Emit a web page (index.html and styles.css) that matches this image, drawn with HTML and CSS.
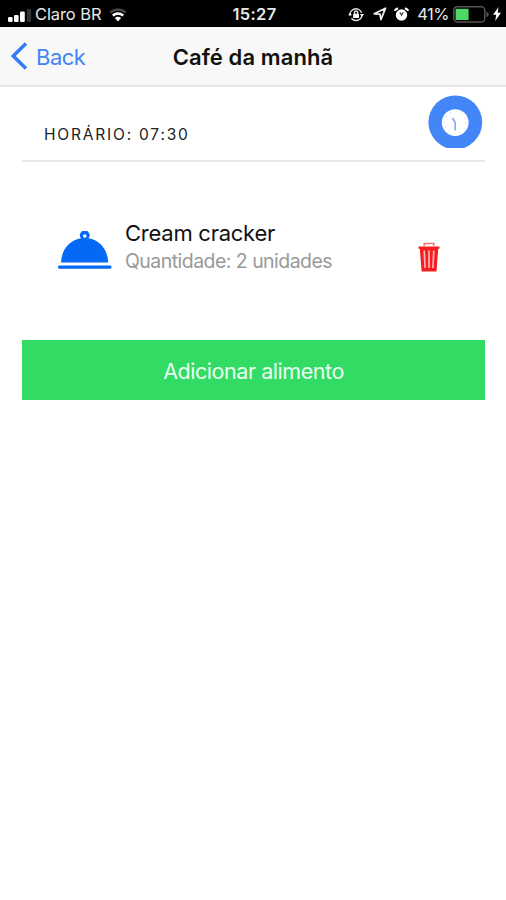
FILE: index.html
```html
<!DOCTYPE html>
<html lang="pt-BR">
<head>
<meta charset="utf-8">
<title>Café da manhã</title>
<link rel="stylesheet" href="styles.css">
</head>
<body>
<div class="status">
  <div class="status-left">
    <svg class="signal" width="24" height="14" viewBox="0 0 24 14"><rect x="0" y="9" width="4.6" height="5" rx="1.2"/><rect x="6" y="7" width="4.6" height="7" rx="1.2"/><rect x="12" y="3.5" width="4.8" height="10.5" rx="1.2"/><rect class="dim" x="18.8" y="1" width="4.4" height="13" rx="1"/></svg>
    <span class="carrier">Claro BR</span>
    <svg class="wifi" width="18" height="14" viewBox="0 0 18 14"><path class="dim-stroke" d="M1.2 4.5Q9-1.5 16.8 4.5"/><path d="M3.8 7.6Q9 3.4 14.2 7.6"/><path class="solid" d="M5.9 10Q9 7.6 12.1 10L9 13.4Z"/></svg>
  </div>
  <span class="clock">15:27</span>
  <div class="status-right">
    <svg class="lock" width="17" height="15" viewBox="0 0 17 15"><path d="M2 8.5A6 6 0 0 1 13.6 5.8M14 8A6 6 0 0 1 3.4 11.3"/><path d="M11.8 7h4.4l-2.2 2.6zM4 8.3H.2L2 5.8z" class="solid"/><rect class="solid" x="5.2" y="6.8" width="5.8" height="4.2" rx=".6"/><path d="M6.5 7V5.5a1.6 1.6 0 0 1 3.2 0V7"/></svg>
    <svg class="arrow" width="14" height="14" viewBox="0 0 14 14"><path d="M1.2 6.8L12.5 1.2L8 12.5L7 7.1Z"/></svg>
    <svg class="alarm" width="15" height="15" viewBox="0 0 15 15"><circle class="solid" cx="7.5" cy="8" r="5.7"/><path d="M1 4Q1.3 1.5 4.2 1.4M10.8 1.4Q13.7 1.5 14 4"/><path class="hands" d="M5.8 5.4L7.6 8.2L9.2 5.3"/></svg>
    <span class="percent">41%</span>
    <svg class="battery" width="37" height="17" viewBox="0 0 37 17"><rect x=".8" y=".8" width="31" height="15.2" rx="3.6"/><path class="nub" d="M33.5 5.5Q38 8.4 33.5 11.3Z"/><rect class="charge" x="2.6" y="2.8" width="13" height="11.2"/></svg>
    <svg class="bolt" width="8" height="14" viewBox="0 0 8 14"><path d="M5.5 0L0 7.8h3.2L2.2 14L8 5.8H4.7Z"/></svg>
  </div>
</div>
<header class="nav">
  <a class="back"><svg width="17" height="28" viewBox="0 0 17 28"><path d="M15 1.6L2.2 14L15 26.4"/></svg><span class="back-label">Back</span></a>
  <h1 class="title">Café da manhã</h1>
</header>
<main class="content">
  <section class="schedule">
    <span class="time">HORÁRIO: 07:30</span>
    <svg class="clock-button" width="55" height="53" viewBox="0 0 55 53"><circle class="disc" cx="27.3" cy="27.3" r="26.9"/><circle class="face" cx="27.2" cy="27.6" r="13.4"/><circle class="ticks" cx="27.2" cy="27.6" r="11"/><path class="hand" d="M24.5 23L27.2 27.3V35.6"/></svg>
  </section>
  <section class="food">
    <svg class="cloche" width="54" height="39" viewBox="0 0 54 39"><path d="M3 31.5C3.5 18 12 9 23 7.2A4.8 4.8 0 1 1 30.5 7.2C41.5 9 49.7 18 50.2 31.5Z"/><circle class="hole" cx="26.8" cy="5" r="1.8"/><rect x="0" y="34.5" width="53.5" height="3.2" rx="1.4"/></svg>
    <div class="details"><span class="food-name">Cream cracker</span><span class="amount">Quantidade: 2 unidades</span></div>
    <svg class="trash" width="22" height="31" viewBox="0 0 22 31"><path class="handle" d="M6.2 4V1.4H15.8V4"/><path class="bin" d="M.5 4.5H21.5V6.8H20.2L18.5 29.6H3.6L1.8 6.8H.5Z"/><path class="slots" d="M6.2 8.5L7.1 26M11 8.5V26M15.8 8.5L14.9 26"/></svg>
  </section>
  <button class="add">Adicionar alimento</button>
</main>
</body>
</html>
```
FILE: styles.css
```css
* { box-sizing: border-box; }
body { margin: 0; min-height: 900px; background: #fff; color: #111; font-family: Inter, "Liberation Sans", sans-serif; }
svg { display: block; flex: none; }
.status { height: 27px; background: #000; color: #e8e8e8; display: grid; grid-template-columns: 1fr auto 1fr; align-items: center; padding: 1px 5px 0 8px; fill: #fff; font-size: 16.5px; line-height: 26px; }
.status-left, .status-right { display: flex; align-items: center; white-space: nowrap; }
.status-right { justify-content: flex-end; }
.signal { margin-top: 1px; }
.status .dim { fill: #333; }
.carrier { margin-left: 3px; letter-spacing: -.1px; }
.wifi { margin: 1px 0 0 8px; fill: none; stroke: #fff; stroke-width: 2.6; }
.wifi .dim-stroke { stroke: #444; }
.solid { fill: #fff; stroke: none; }
.clock { font-weight: 600; font-size: 16.5px; letter-spacing: .3px; }
.lock { fill: none; stroke: #ddd; stroke-width: 1.5; }
.arrow { margin-left: 8px; fill: none; stroke: #eee; stroke-width: 1.8; stroke-linejoin: round; }
.alarm { margin-left: 7px; fill: none; stroke: #fff; stroke-width: 2; }
.alarm .hands { stroke: #333; stroke-width: 1.2; }
.percent { margin-left: 8px; letter-spacing: -.5px; }
.battery { margin-left: 4px; fill: none; stroke: #555; stroke-width: 1.5; }
.battery .nub { fill: #555; stroke: none; }
.battery .charge { fill: #4cd964; stroke: none; }
.bolt { margin-left: 3px; }
.nav { height: 60px; background: #f8f8f8; border-bottom: 2px solid #e7e7e7; display: grid; grid-template-columns: 1fr auto 1fr; align-items: center; padding: 0 11px; }
.back { display: flex; align-items: center; gap: 8px; color: #4385f5; font-size: 22px; line-height: 28px; letter-spacing: -.5px; }
.back-label { margin-top: 1px; }
.back svg { fill: none; stroke: #2f7cf6; stroke-width: 3.5; }
.title { margin: 1px 0 0; font-size: 22px; line-height: 28px; font-weight: 600; letter-spacing: .1px; color: #111; }
.content { padding: 0 21px 0 22px; }
.schedule { height: 75px; border-bottom: 2px solid #e7e7e7; display: flex; justify-content: space-between; padding: 8px 2px 0 22px; }
.time { margin-top: 30px; font-size: 15.5px; line-height: 20px; letter-spacing: 1.8px; color: #222; }
.disc { fill: #4286f7; }
.face { fill: #fff; }
.ticks { fill: none; stroke: #d4e2fc; stroke-width: 1.4; stroke-dasharray: 1.2 4.56; }
.hand { fill: none; stroke: #78a7f8; stroke-width: 1.5; }
.food { height: 178px; display: flex; align-items: flex-start; padding: 57px 45px 0 36px; }
.cloche { margin-top: 12px; fill: #0669f5; }
.cloche .hole { fill: #fff; }
.details { display: flex; flex-direction: column; margin-left: 13px; flex: 1; white-space: nowrap; }
.food-name { font-size: 22px; line-height: 28px; letter-spacing: -.25px; }
.amount { font-size: 19.5px; line-height: 28px; letter-spacing: -.54px; color: #999; }
.trash { margin-top: 23px; }
.bin { fill: #f51d20; }
.handle { fill: none; stroke: #f77375; stroke-width: 1.5; }
.slots { stroke: #ffb5b5; stroke-width: 1.7; fill: none; }
.add { display: block; width: 100%; height: 60px; border: 0; padding: 1px 0 0; background: #32db64; color: #e9fff0; font-family: inherit; font-size: 21.5px; line-height: 28px; letter-spacing: -.45px; }
```
